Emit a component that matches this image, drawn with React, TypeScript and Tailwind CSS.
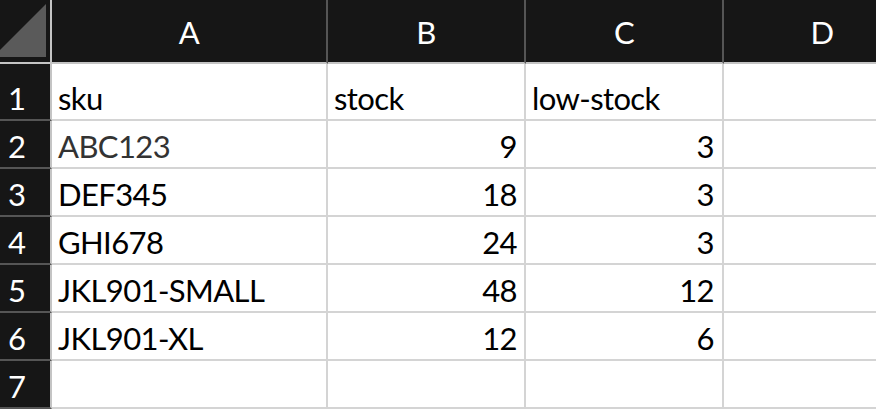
import React from "react";

const rows: { n: number; sku: string; stock: string; low: string; h: string; gray?: boolean }[] = [
  { n: 1, sku: "sku", stock: "stock", low: "low-stock", h: "h-[57px]" },
  { n: 2, sku: "ABC123", stock: "9", low: "3", h: "h-[48px]", gray: true },
  { n: 3, sku: "DEF345", stock: "18", low: "3", h: "h-[48px]" },
  { n: 4, sku: "GHI678", stock: "24", low: "3", h: "h-[48px]" },
  { n: 5, sku: "JKL901-SMALL", stock: "48", low: "12", h: "h-[48px]" },
  { n: 6, sku: "JKL901-XL", stock: "12", low: "6", h: "h-[48px]" },
  { n: 7, sku: "", stock: "", low: "", h: "h-[48px]" },
];

export default function App() {
  return (
    <div className="w-[876px] h-[410px] overflow-hidden bg-white font-['Lato',sans-serif] text-[31px] tracking-[-0.6px] leading-none text-black">
      {/* Header row */}
      <div className="flex h-[64px]">
        <div className="relative w-[52px] shrink-0 bg-[#161616] border-r-2 border-b-2 border-[#c4c4c4]">
          <svg className="absolute left-0 top-0" width="50" height="62" viewBox="0 0 50 62">
            <polygon points="46,4 46,57 0,57 0,50" fill="#5a5a5a" />
          </svg>
        </div>
        {["A", "B", "C", "D"].map((c, i) => (
          <div
            key={c}
            className={`${i === 0 ? "w-[276px]" : "w-[198px]"} shrink-0 flex items-center justify-center bg-[#161616] text-white border-r-2 border-r-[#555555] border-b-2 border-b-[#c4c4c4] pt-[2px]`}
          >
            {c}
          </div>
        ))}
      </div>
      {rows.map((r) => (
        <div key={r.n} className={`flex ${r.h}`}>
          <div className="w-[52px] shrink-0 flex items-end pl-[8px] pb-[5px] bg-[#161616] text-white border-r-2 border-r-[#c4c4c4] border-b-2 border-b-[#555555]">
            {r.n}
          </div>
          <div
            className={`w-[276px] shrink-0 flex items-end pl-[6px] pb-[5px] border-r-2 border-b-2 border-[#d4d4d4] ${r.gray ? "text-[#333333]" : ""}`}
          >
            {r.sku}
          </div>
          <div
            className={`w-[198px] shrink-0 flex items-end pb-[5px] border-r-2 border-b-2 border-[#d4d4d4] ${r.n === 1 ? "justify-start pl-[6px]" : "justify-end pr-[7px]"}`}
          >
            {r.stock}
          </div>
          <div
            className={`w-[198px] shrink-0 flex items-end pb-[5px] border-r-2 border-b-2 border-[#d4d4d4] ${r.n === 1 ? "justify-start pl-[6px]" : "justify-end pr-[8px]"}`}
          >
            {r.low}
          </div>
          <div className="w-[198px] shrink-0 border-r-2 border-b-2 border-[#d4d4d4]" />
        </div>
      ))}
    </div>
  );
}
